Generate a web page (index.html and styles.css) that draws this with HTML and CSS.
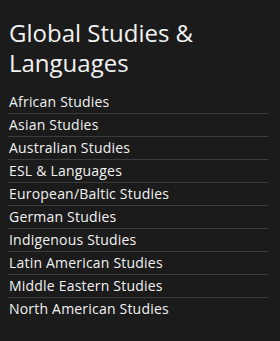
FILE: index.html
```html
<!DOCTYPE html>
<html lang="en">
<head>
    <meta charset="UTF-8">
    <meta name="viewport" content="width=device-width, initial-scale=1.0">
    <title>Global Studies &amp; Languages</title>
    <link rel="stylesheet" href="styles.css">
</head>
<body>
    <div class="menu">
        <h2 class="title">Global Studies &amp; Languages</h2>
        <ul class="links">
            <li><a href="#">African Studies</a></li>
            <li><a href="#">Asian Studies</a></li>
            <li><a href="#">Australian Studies</a></li>
            <li><a href="#">ESL &amp; Languages</a></li>
            <li><a href="#">European/Baltic Studies</a></li>
            <li><a href="#">German Studies</a></li>
            <li><a href="#">Indigenous Studies</a></li>
            <li><a href="#">Latin American Studies</a></li>
            <li><a href="#">Middle Eastern Studies</a></li>
            <li><a href="#">North American Studies</a></li>
        </ul>
    </div>
</body>
</html>
```
FILE: styles.css
```css
html, body { margin: 0; background: #1b1b1b; }
body { font-family: "Open Sans", Arial, sans-serif; color: #f2f2f2; }
.menu { padding: 18px 12px 20px 8px; }
.title { font-size: 24px; font-weight: 400; line-height: 30px; margin: 0 0 13px 1px; }
.links { list-style: none; margin: 0; padding: 0; }
.links li { border-bottom: 1px solid #3a3a3a; }
.links li:last-child { border-bottom: none; }
.links a { display: block; color: #f2f2f2; text-decoration: none; font-size: 14px; font-weight: 500; line-height: 22px; padding-left: 1px; letter-spacing: 0.2px; }
```
